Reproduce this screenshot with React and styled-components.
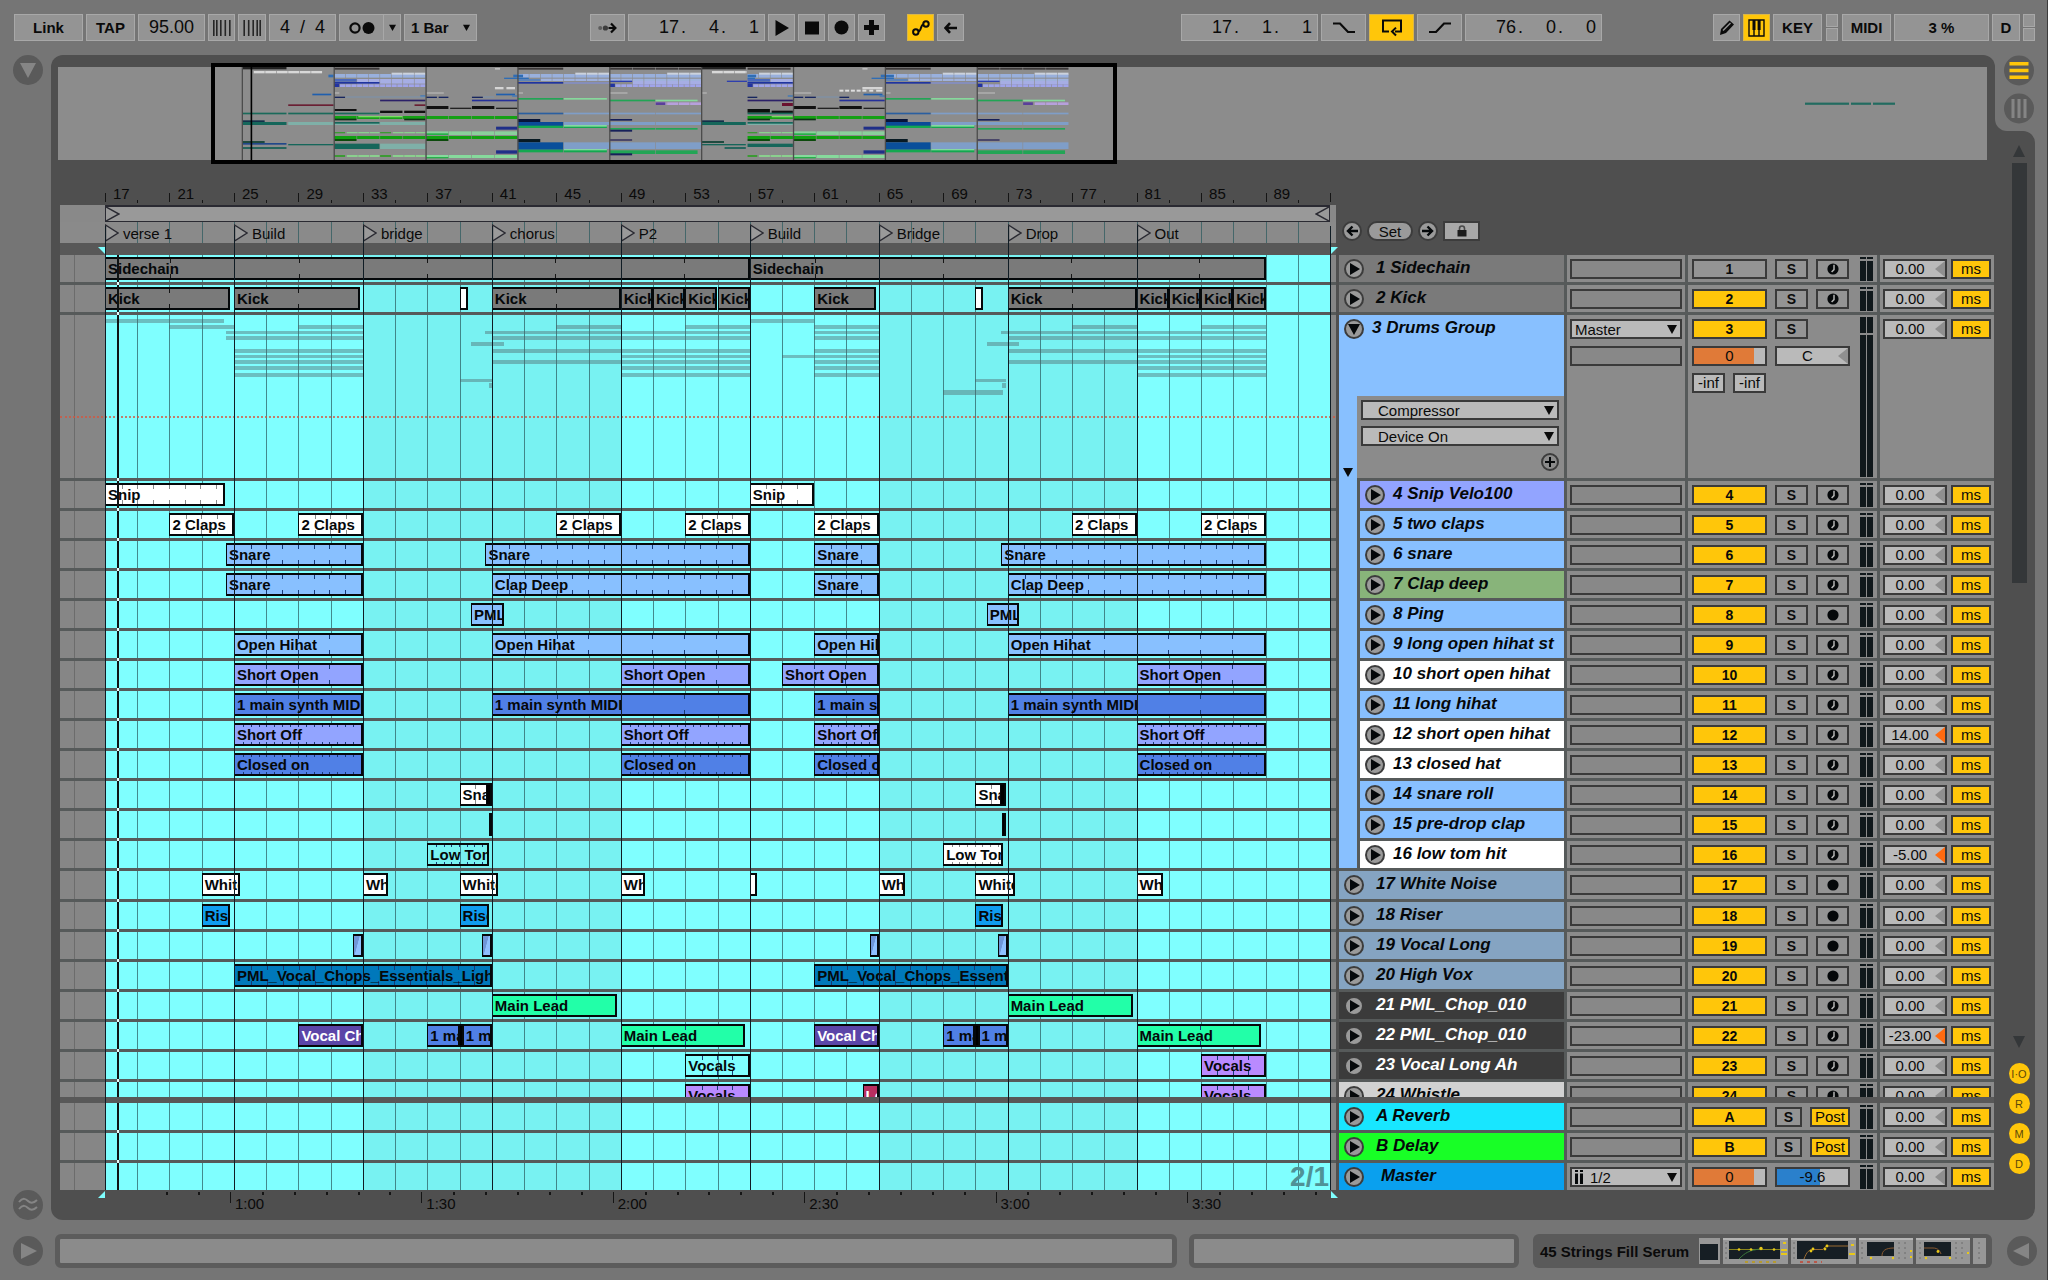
import React from "react";
import styled, { createGlobalStyle } from "styled-components";

const C = {
  chrome: "#757575",
  panel: "#4f4f4f",
  line: "#565a5a",
  cell: "#8b8b8b",
  button: "#949494",
  edge: "#a8a8a8",
  yellow: "#ffc60a",
  cyan: "#7fffff",
  field: "#bababa",
  outline: "#3a3a3a",
};
const FONT = '"Liberation Sans", Arial, sans-serif';

const GlobalStyle = createGlobalStyle`
  *, *::before, *::after { box-sizing: border-box; }
  html, body { margin: 0; height: 100%; overflow: hidden; }
  body { background: ${C.chrome}; font-family: ${FONT}; color: #0a0a0a; }
  button, input, select { font-family: inherit; color: inherit; margin: 0; padding: 0; border-radius: 0; }
`;

/* ---------- page frame ---------- */

const Page = styled.div`
  display: grid;
  grid-template-rows: 55px minmax(0, 1fr) 60px;
  height: 100vh;
  background: ${C.chrome};
  border-right: 1px solid #3c3c3c;
`;

const Body = styled.div`
  display: grid;
  grid-template-columns: 51px minmax(0, 1fr) 40px 12px;
  min-height: 0;
`;

const LeftRail = styled.div`
  display: flex;
  flex-direction: column;
  align-items: center;
  justify-content: space-between;
  padding-left: 4px;
`;

const Panel = styled.main`
  display: grid;
  grid-template-rows: 105px 45px 17px minmax(0, 1fr) 30px;
  min-height: 0;
  background: ${C.panel};
  border-radius: 12px 12px 0 12px;
`;

const IconButton = styled.button`
  display: flex;
  align-items: center;
  justify-content: center;
  border: 0;
  background: none;
  cursor: pointer;
  svg { display: block; }
`;

/* ---------- control bar ---------- */

const Toolbar = styled.header`
  display: grid;
  grid-template-columns: 576px 591px 1fr auto;
  align-items: start;
  padding: 14px 12px 0 14px;
`;

const Group = styled.div`
  display: flex;
  gap: 3px;
`;

const ToolButton = styled.button`
  display: flex;
  align-items: center;
  justify-content: center;
  width: ${(p) => p.$w}px;
  height: 27px;
  border: 1px solid ${(p) => (p.$on ? "#d9b64a" : C.edge)};
  background: ${(p) => (p.$on ? C.yellow : C.button)};
  font-size: 15px;
  font-weight: bold;
  margin-left: ${(p) => p.$gap || 0}px;
`;

const ToolInput = styled.input`
  width: ${(p) => p.$w}px;
  height: 27px;
  border: 1px solid ${C.edge};
  background: ${C.button};
  font-size: 18px;
  text-align: center;
`;

const Metronome = styled.div`
  display: flex;
  width: 62px;
  height: 27px;
  border: 1px solid ${C.edge};
  background: ${C.button};
  ${IconButton}:first-child { flex: 1; border-right: 1px solid ${C.edge}; }
  ${IconButton}:last-child { width: 16px; }
`;

const SelectWrap = styled.label`
  display: flex;
  align-items: center;
  width: ${(p) => (p.$w ? p.$w + "px" : "auto")};
  height: ${(p) => p.$h || 20}px;
  border: ${(p) => (p.$tool ? `1px solid ${C.edge}` : `2px solid ${C.outline}`)};
  background: ${(p) => (p.$tool ? C.button : C.field)};
  padding: 0 ${(p) => (p.$tool ? 6 : 3)}px;
  select {
    flex: 1;
    min-width: 0;
    border: 0;
    background: none;
    appearance: none;
    outline: 0;
    font-size: 15px;
    font-weight: ${(p) => (p.$tool ? "bold" : "normal")};
    padding-left: ${(p) => p.$pad || 0}px;
  }
`;

const Position = styled.div`
  display: flex;
  align-items: center;
  width: 137px;
  height: 27px;
  border: 1px solid ${C.edge};
  background: ${C.button};
  font-size: 18px;
  input {
    width: 33px;
    border: 0;
    background: none;
    font-size: 18px;
    text-align: right;
  }
  input:first-child { width: 50px; }
  span { width: 7px; padding-left: 2px; }
`;

const MiniPair = styled.div`
  display: grid;
  grid-template-rows: 13px 13px;
  gap: 1px;
  width: ${(p) => p.$w}px;
  margin: 0 ${(p) => p.$gap || 0}px;
  span { border: 1px solid ${C.edge}; background: ${C.button}; }
`;

const Caret = ({ size = 10 }) => (
  <svg width={size} height={size} viewBox="0 0 10 10" aria-hidden="true">
    <path d="M0 1h10L5 10z" fill="#0a0a0a" />
  </svg>
);

const Bars = ({ flip }) => (
  <svg width="18" height="16" viewBox="0 0 18 16" aria-hidden="true">
    <g fill="#262626" transform={flip ? "translate(18 0) scale(-1 1)" : undefined}>
      <rect x="0" y="0" width="1.6" height="16" />
      <rect x="3" y="0" width="1.6" height="16" />
      <rect x="7" y="0" width="1.6" height="16" />
      <rect x="11.5" y="0" width="1.6" height="16" />
      <rect x="16" y="0" width="1.6" height="16" />
    </g>
  </svg>
);

function PositionField({ label, values }) {
  return (
    <Position role="group" aria-label={label}>
      <input aria-label={label + " bars"} defaultValue={values[0]} />
      <span>.</span>
      <input aria-label={label + " beats"} defaultValue={values[1]} />
      <span>.</span>
      <input aria-label={label + " sixteenths"} defaultValue={values[2]} />
    </Position>
  );
}

function ControlBar() {
  return (
    <Toolbar>
      <Group>
        <ToolButton $w={69}>Link</ToolButton>
        <ToolButton $w={49}>TAP</ToolButton>
        <ToolInput $w={67} aria-label="Tempo" defaultValue="95.00" />
        <ToolButton $w={27} aria-label="Nudge down"><Bars /></ToolButton>
        <ToolButton $w={28} aria-label="Nudge up"><Bars flip /></ToolButton>
        <ToolInput $w={67} aria-label="Time signature" defaultValue="4  /  4" />
        <Metronome>
          <IconButton aria-label="Metronome">
            <svg width="28" height="14" viewBox="0 0 28 14">
              <circle cx="7" cy="7" r="4.6" fill="none" stroke="#0a0a0a" strokeWidth="2.2" />
              <circle cx="20.5" cy="7" r="6" fill="#0a0a0a" />
            </svg>
          </IconButton>
          <IconButton aria-label="Metronome options"><Caret size={7} /></IconButton>
        </Metronome>
        <SelectWrap $tool $w={73} $h={27}>
          <select aria-label="Quantization" defaultValue="1 Bar"><option>1 Bar</option></select>
          <Caret size={7} />
        </SelectWrap>
      </Group>
      <Group>
        <ToolButton $w={35} aria-label="Follow">
          <svg width="19" height="12" viewBox="0 0 19 12">
            <circle cx="2.2" cy="6" r="2" fill="#5c5c5c" />
            <circle cx="7.4" cy="6" r="2.6" fill="#3c3c3c" />
            <path d="M10.500 6h6M13 1.500L17.400 6 13 10.500" fill="none" stroke="#0a0a0a" strokeWidth="2.200" />
          </svg>
        </ToolButton>
        <PositionField label="Arrangement position" values={[17, 4, 1]} />
        <ToolButton $w={27} aria-label="Play">
          <svg width="16" height="16" viewBox="0 0 16 16"><path d="M1.5 0v16L15 8z" fill="#0a0a0a" /></svg>
        </ToolButton>
        <ToolButton $w={27} aria-label="Stop">
          <svg width="14" height="14" viewBox="0 0 14 14"><rect width="14" height="13" y=".5" fill="#0a0a0a" /></svg>
        </ToolButton>
        <ToolButton $w={27} aria-label="Record">
          <svg width="15" height="15" viewBox="0 0 15 15"><circle cx="7.5" cy="7.5" r="7" fill="#0a0a0a" /></svg>
        </ToolButton>
        <ToolButton $w={27} aria-label="Overdub">
          <svg width="15" height="15" viewBox="0 0 15 15"><path d="M5 0h5v5h5v5h-5v5H5v-5H0V5h5z" fill="#0a0a0a" /></svg>
        </ToolButton>
        <ToolButton $w={27} $on $gap={19} aria-label="Automation arm">
          <svg width="18" height="16" viewBox="0 0 18 16">
            <g fill="none" stroke="#0a0a0a" strokeWidth="2">
              <circle cx="3.8" cy="12" r="2.7" />
              <circle cx="14" cy="4" r="2.7" />
              <path d="M6.4 11.2c3 0 2-6.2 5-6.6" />
            </g>
          </svg>
        </ToolButton>
        <ToolButton $w={27} aria-label="Back to arrangement">
          <svg width="14" height="12" viewBox="0 0 14 12">
            <path d="M1.5 6H13M6 1.2L1.5 6 6 10.8" fill="none" stroke="#0a0a0a" strokeWidth="2.6" />
          </svg>
        </ToolButton>
      </Group>
      <Group>
        <PositionField label="Loop start" values={[17, 1, 1]} />
        <ToolButton $w={45} aria-label="Punch in">
          <svg width="24" height="12" viewBox="0 0 24 12"><path d="M1 1.5h7l8 8.5h7" fill="none" stroke="#0a0a0a" strokeWidth="2.2" /></svg>
        </ToolButton>
        <ToolButton $w={45} $on aria-label="Loop">
          <svg width="22" height="18" viewBox="0 0 22 18">
            <path d="M8 12.5H2V1.5h18v11h-6M15 8.6l-4 3.9 4 4" fill="none" stroke="#0a0a0a" strokeWidth="2" />
          </svg>
        </ToolButton>
        <ToolButton $w={45} aria-label="Punch out">
          <svg width="24" height="12" viewBox="0 0 24 12"><path d="M1 10h7l8-8.5h7" fill="none" stroke="#0a0a0a" strokeWidth="2.2" /></svg>
        </ToolButton>
        <PositionField label="Loop length" values={[76, 0, 0]} />
      </Group>
      <Group>
        <ToolButton $w={27} aria-label="Draw mode">
          <svg width="18" height="18" viewBox="0 0 18 18">
            <path d="M2 16l1-6L11.5 1.5l4.5 4L8 14z" fill="#0a0a0a" />
            <path d="M5 11.5L12.5 4" stroke="#949494" strokeWidth="1.4" />
          </svg>
        </ToolButton>
        <ToolButton $w={27} $on aria-label="Computer MIDI keyboard">
          <svg width="17" height="18" viewBox="0 0 17 18">
            <path d="M1 1h15v16H1zM6 1v16M11 1v16" fill="none" stroke="#0a0a0a" strokeWidth="1.4" />
            <path d="M4.5 1h3v10h-3zM9.6 1h3v10h-3z" fill="#0a0a0a" />
          </svg>
        </ToolButton>
        <ToolButton $w={49}>KEY</ToolButton>
        <MiniPair $w={12} $gap={1}><span /><span /></MiniPair>
        <ToolButton $w={49}>MIDI</ToolButton>
        <ToolButton $w={95}>3 %</ToolButton>
        <ToolButton $w={28}>D</ToolButton>
        <MiniPair $w={12}><span /><span /></MiniPair>
      </Group>
    </Toolbar>
  );
}

/* ---------- overview ---------- */

const OverviewArea = styled.div`
  display: flex;
  padding: 12px 8px 0 7px;
`;

const OverviewStrip = styled.div`
  position: relative;
  flex: 1;
  height: 93px;
  background: #8c8c8c;
  svg { display: block; width: 100%; height: 100%; }
`;

const ViewWindow = styled.div`
  position: absolute;
  inset: -4px 0;
  border: 4px solid #000;
`;

const rep = (y, h, color, spans) => ({ y, h, color, spans });
const each = (from, to, step = 1) => {
  const out = [];
  for (let b = from; b < to; b += step) out.push([b, Math.min(b + step, to)]);
  return out;
};

const OVERVIEW = [
  rep(35, 8, "#222", [[17, 20.9], [57, 60.9]]),
  rep(38, 6, "#3d3a3a", [[25, 29], [41, 45], ...each(49, 57, 2), [61, 64.8], [73, 77], ...each(81, 89, 2)]),
  rep(39, 5, "#bbb", [[39, 39.5], [71, 71.5]]),
  rep(48, 7, "#d8d8d8", [...each(18, 24), ...each(57.9, 61)]),
  rep(57, 11, "#99b0dd", [...each(25, 33), ...each(41, 57), ...each(61, 65), ...each(73, 89)]),
  rep(53, 6, "#ccd2dc", [...each(30, 33), ...each(46, 49), ...each(54, 57), ...each(62, 65), ...each(78, 81), ...each(86, 89)]),
  rep(59, 8, "#2f6db5", [[24.5, 25], [40.6, 41.5], [61, 61.8], [72.6, 73.8]]),
  rep(68, 4, "#2f6db5", [[39.8, 42], [61, 61.7], [71.8, 73.8]]),
  rep(72, 8, "#4a68bb", [[25, 27], [61, 63]]),
  rep(72, 14, "#a6aee4", [...each(27, 33), [63, 65]]),
  rep(72, 6, "#5c83b8", [[41, 43], [73, 75]]),
  rep(71, 7, "#9fb2dd", [...each(43, 57), ...each(75, 89)]),
  rep(78, 10, "#a6aee4", [...each(51, 57), ...each(83, 89)]),
  rep(81, 5, "#1f34a0", [[25, 29], [41, 45], [61, 65], [73, 77]]),
  rep(82, 4, "#8290d2", [[45, 49], [77, 81]]),
  rep(77, 4, "#2f3fae", [[49, 51], [59.2, 61], [81, 83]]),
  rep(88, 8, "#a0a4ea", [...each(25.5, 33, 0.5), ...each(49.5, 57, 0.5), ...each(61.5, 65, 0.5), ...each(81.5, 89, 0.5)]),
  rep(86, 10, "#2233a0", [[25, 25.5], [49, 49.5], [61, 61.5], [81, 81.5]]),
  rep(96, 7, "#d5d5d5", [[39, 39.8], [40, 40.8], [71, 72.8]]),
  rep(104, 6, "#dedede", [[69, 69.4], [69.5, 69.9], [70, 70.4], [70.5, 70.9], [71, 71.4], [71.6, 72], [72.2, 72.8]]),
  rep(112, 4, "#b4b4b4", [[25, 25.5], [33, 34.6], [41, 41.5], [49, 50.6], [57, 57.5], [65, 66.6], [73, 73.5], [81, 82.6]]),
  rep(116, 5, "#1f5fae", [[23.1, 24.8], [39.1, 40.8], [71.1, 72.8]]),
  rep(121, 4, "#3c78bb", [[32.5, 33], [40.5, 41], [64.5, 65], [72.5, 73]]),
  rep(125, 4, "#17265f", [[25, 26], [33, 34], [34.1, 35], [37, 38], [61, 61.9], [65, 65.9], [66, 67], [69, 69.9]]),
  rep(125, 2, "#7496c0", [[26, 33], [38, 39], [67, 69]]),
  rep(129, 5, "#22a555", [[41, 45], [73, 77]]),
  rep(129, 5, "#86d99c", [[45, 48.8], [77, 80.8]]),
  rep(134, 5, "#2b2068", [[29, 33], [61, 65]]),
  rep(134, 5, "#25309a", [[37, 41], [69, 73]]),
  rep(134, 5, "#22a555", [[49, 53], [81, 85]]),
  rep(134, 5, "#86d99c", [[53, 56.7], [85, 88.7]]),
  rep(142, 8, "#b7a0dc", each(53, 57).concat(each(86, 89))),
  rep(142, 8, "#5a3f9a", [[53, 53.9], [85, 85.9]]),
  rep(148, 5, "#6a1f33", [[21, 25], [32, 33]]),
  rep(144, 9, "#6a1230", [[64, 65]]),
  rep(153, 9, "#111", [[33, 35], [37, 39], [65, 67], [69, 71]]),
  rep(158, 4, "#222", [[35.1, 37], [39.1, 41], [67.1, 69], [71.1, 73]]),
  rep(162, 6, "#101010", [[25, 27]]),
  rep(167, 7, "#101010", [[29, 31], [31.1, 33], [63.1, 65]]),
  rep(162, 11, "#0a0f0d", [[61, 63]]),
  rep(173, 5, "#1a6a5a", [[17, 20.9], [21, 25], [25, 29], [61, 65]]),
  rep(173, 5, "#7f9ec8", [[45, 49], [49, 53], [53, 57], [77, 81], [81, 85], [85, 89]]),
  rep(173, 5, "#2a5fa0", [[41, 45], [73, 77]]),
  rep(183, 9, "#14a014", [...each(25, 33, 2), ...each(33, 41, 2), [61, 65], ...each(65, 73, 2)]),
  rep(183, 4, "#79dc62", [[27.1, 31], [63.1, 65]]),
  rep(191, 5, "#11301a", [[25, 27], [31.1, 33], [61, 63], [65, 67]]),
  rep(192, 5, "#17205a", [[49, 51], [81, 83]]),
  rep(196, 5, "#14304a", [[17, 19], [57, 59]]),
  rep(192, 9, "#06143a", [[41, 43], [73, 75]]),
  rep(201, 9, "#15665a", [[17, 20.9], [57, 60.9]]),
  rep(201, 9, "#7fb0a8", [[21, 25], [25, 29], [29, 33], [61, 65]]),
  rep(201, 5, "#15665a", [[25, 29], [61, 65]]),
  rep(201, 12, "#0b4a98", [[41, 45], [73, 77]]),
  rep(201, 9, "#7f9ec8", [[45, 49], [49, 53], [53, 57], [77, 81], [81, 85], [85, 89]]),
  rep(212, 7, "#14a850", [[41, 45], [45, 48.8], [73, 77], [77, 80.8]]),
  rep(210, 5, "#86d9a0", [[45, 48.8], [77, 80.8]]),
  rep(219, 5, "#22a555", [[49, 53], [53, 56.7], [81, 85], [85, 88.7]]),
  rep(215, 9, "#1f2f88", [[39.1, 41], [71.1, 73]]),
  rep(224, 6, "#17205a", [[49, 51]]),
  rep(231, 4, "#3c9a34", [[25, 26], [29, 30], [61, 61.9]]),
  rep(231, 4, "#8ad08e", each(26.1, 29).concat(each(30.1, 33), each(62, 65))),
  rep(229, 11, "#8ad09c", [...each(33, 41, 2), ...each(65, 73, 2)]),
  rep(235, 5, "#27b04a", [[33, 35], [65, 67]]),
  rep(243, 9, "#10a010", [...each(25, 41, 2), ...each(61, 73, 2)]),
  rep(252, 6, "#0c4a0c", [[25, 27], [33, 35], [61, 63], [65, 67]]),
  rep(252, 10, "#081a24", [[41, 43], [73, 75]]),
  rep(253, 4, "#2a2458", [[49, 51], [81, 83]]),
  rep(258, 6, "#1f4a3f", [[17, 19], [57, 59]]),
  rep(264, 5, "#22488a", [[17, 20.9]]),
  rep(267, 4, "#15665a", [[21, 25], [57, 60.9]]),
  rep(276, 6, "#26655d", [[17, 20.9], [59, 60.9]]),
  rep(266, 16, "#15665a", [[25, 29]]),
  rep(266, 16, "#7fb0a8", [[29, 33]]),
  rep(266, 10, "#15665a", [[61, 65]]),
  rep(262, 22, "#0a4f9a", [[41, 45], [73, 77]]),
  rep(262, 20, "#7f9ec8", [[45, 49], [49, 53], [53, 57], [77, 81], [81, 85], [85, 89]]),
  rep(284, 8, "#14a850", [[41, 45], [45, 48.8], [73, 77], [77, 80.8]]),
  rep(282, 4, "#86d9a0", [[45, 48.8], [77, 80.8]]),
  rep(286, 11, "#22a555", [[49, 53], [53, 56.7], [81, 85], [85, 88.7]]),
  rep(286, 10, "#1f2f88", [[39.1, 41], [71.1, 73]]),
  rep(295, 6, "#17205a", [[49, 51]]),
  rep(300, 6, "#3c9a34", [[25, 26], [29, 30], [61, 61.9]]),
  rep(300, 6, "#8ad08e", each(26.1, 29).concat(each(30.1, 33), each(62, 65))),
  rep(300, 9, "#86da9c", [...each(33, 41, 2), ...each(65, 73, 2)]),
  rep(306, 4, "#27b04a", [[33, 35], [65, 67]]),
];

const OV_W = 1929;
const ovX = (bar) => 184.3 + (bar - 17) * 11.483;

function Overview() {
  return (
    <OverviewArea>
      <OverviewStrip>
        <svg viewBox={`0 0 ${OV_W} 93`} preserveAspectRatio="none" aria-label="Arrangement overview">
          {OVERVIEW.map((r, i) =>
            r.spans.map(([a, b], j) => (
              <rect key={i + "-" + j} x={ovX(a)} y={r.y / 3 - 12} width={ovX(b) - ovX(a) - 0.6} height={r.h / 3} fill={r.color} />
            ))
          )}
          {each(17, 89, 8).map(([b]) => (
            <rect key={b} x={ovX(b) - 0.6} y="0" width="1.3" height="93" fill="#4c4c4c" />
          ))}
          <rect x="192.6" y="0" width="1.6" height="93" fill="#000" />
          <g fill="#226b60">
            <rect x="1747" y="35.6" width="44" height="2.2" />
            <rect x="1793" y="35.6" width="20" height="2.2" />
            <rect x="1815" y="35.6" width="22" height="2.2" />
          </g>
        </svg>
        <ViewWindow style={{ left: `${(153 / OV_W) * 100}%`, right: `${(870 / OV_W) * 100}%` }} />
      </OverviewStrip>
    </OverviewArea>
  );
}

/* ---------- timeline data ---------- */

const START = 17;
const SPAN = 76;
const HEAD = 17.75;
const pct = (bar) => `${((bar - START) / SPAN) * 100}%`;
const wPct = (bars) => `${(bars / SPAN) * 100}%`;

const GREY = "#7a7a7a", WHITE = "#fff", SKY = "#88c0ff", LILAC = "#92a4ff", ROYAL = "#5080e6";
const OCEAN = "#0078bb", MINT = "#22ffa8", PURPLE = "#b98aff", VIOLET = "#5b45a8", CRIMSON = "#b82f60";

const many = (name, color, tick, spans) => spans.map(([a, b]) => ({ name, color, tick, a, b }));
const FULL = [[25, 33], [41, 57], [61, 65], [73, 89]];
const HALF = [[25, 33], [49, 57], [61, 65], [81, 89]];

const TRACKS = [
  { n: 1, name: "Sidechain", color: GREY, off: true, clips: many("Sidechain", GREY, 4, [[17, 57], [57, 89]]) },
  {
    n: 2, name: "Kick", color: GREY,
    clips: [
      ...many("Kick", GREY, 4, [[17, 24.75], [25, 32.85], [41, 49], ...each(49, 57, 2), [61, 64.85], [73, 81], ...each(81, 89, 2)]),
      ...many("", WHITE, 0, [[39, 39.5], [71, 71.5]]),
    ],
  },
  { n: 3, name: "Drums Group", color: SKY, group: true, clips: [] },
  { n: 4, name: "Snip Velo100", color: LILAC, nested: true, clips: many("Snip", WHITE, 1, [[17, 24.45], [57, 61]]) },
  { n: 5, name: "two claps", color: SKY, nested: true, clips: many("2 Claps", WHITE, 1, [[21, 25], [29, 33], [45, 49], [53, 57], [61, 65], [77, 81], [85, 89]]) },
  { n: 6, name: "snare", color: SKY, nested: true, clips: many("Snare", SKY, 1, [[24.5, 33], [40.6, 57], [61, 65], [72.6, 89]]) },
  {
    n: 7, name: "Clap deep", color: "#88b47a", nested: true,
    clips: [...many("Snare", SKY, 1, [[24.5, 33], [61, 65]]), ...many("Clap Deep", SKY, 1, [[41, 57], [73, 89]])],
  },
  { n: 8, name: "Ping", color: SKY, nested: true, audio: true, clips: many("PML", SKY, 0, [[39.7, 41.75], [71.7, 73.7]]) },
  { n: 9, name: "long open hihat st", color: SKY, nested: true, clips: many("Open Hihat", SKY, 2, FULL) },
  { n: 10, name: "short open hihat", color: WHITE, nested: true, clips: many("Short Open", LILAC, 2, [[25, 33], [49, 57], [59, 65], [81, 89]]) },
  { n: 11, name: "long hihat", color: SKY, nested: true, clips: many("1 main synth MIDI", ROYAL, 4, FULL) },
  { n: 12, name: "short open hihat", color: WHITE, nested: true, delay: "14.00", clips: many("Short Off", LILAC, 0.5, HALF) },
  { n: 13, name: "closed hat", color: WHITE, nested: true, clips: many("Closed on", ROYAL, 0.5, HALF) },
  {
    n: 14, name: "snare roll", color: SKY, nested: true,
    clips: [...many("Snare", WHITE, 1, [[39, 41], [71, 72.9]]), ...many("", "#000", 0, [[40.65, 41], [72.55, 72.9]])],
  },
  { n: 15, name: "pre-drop clap", color: SKY, nested: true, clips: many("", "#000", 0, [[40.8, 41], [72.65, 72.9]]) },
  {
    n: 16, name: "low tom hit", color: WHITE, nested: true, last: true, delay: "-5.00",
    clips: [...many("Low Tom", "transparent", 0.5, [[37, 40.8]]), ...many("Low Tom", WHITE, 0.5, [[69, 72.7]])],
  },
  {
    n: 17, name: "White Noise", color: "#85a4c2", audio: true,
    clips: [
      ...many("White", WHITE, 0, [[23, 25.4], [33, 34.55], [39, 41.4], [49, 50.5], [65, 66.65], [71, 73.45], [81, 82.65]]),
      ...many("", WHITE, 0, [[57, 57.45]]),
    ],
  },
  { n: 18, name: "Riser", color: "#85a4c2", audio: true, clips: many("Riser", "#0f9cef", 0, [[23, 24.75], [39, 40.8], [71, 72.7]]) },
  { n: 19, name: "Vocal Long", color: "#85a4c2", audio: true, clips: many("", "fade", 0, [[32.4, 33], [40.4, 41], [64.45, 65], [72.4, 73]]) },
  { n: 20, name: "High Vox", color: "#85a4c2", audio: true, clips: many("PML_Vocal_Chops_Essentials_Light", OCEAN, 1, [[25, 41], [61, 73]]) },
  { n: 21, name: "PML_Chop_010", color: "#3b3b3b", light: true, clips: many("Main Lead", MINT, 4, [[41, 48.75], [73, 80.75]]) },
  {
    n: 22, name: "PML_Chop_010", color: "#3b3b3b", light: true, delay: "-23.00",
    clips: [
      ...many("Vocal Chop", VIOLET, 0, [[29, 33], [61, 65]]),
      ...many("1 main", ROYAL, 0, [[37, 39], [39.2, 41], [69, 71], [71.2, 73]]),
      ...many("", "#000", 0, [[38.95, 39.3], [70.95, 71.3]]),
      ...many("Main Lead", MINT, 4, [[49, 56.7], [81, 88.75]]),
    ],
  },
  {
    n: 23, name: "Vocal Long Ah", color: "#3b3b3b", light: true,
    clips: [...many("Vocals", "transparent", 1, [[53, 57]]), ...many("Vocals", PURPLE, 1, [[85, 89]])],
  },
  {
    n: 24, name: "Whistle", color: "#d2d2d2",
    clips: [...many("Vocals", PURPLE, 1, [[53, 57], [85, 89]]), ...many("Lead", CRIMSON, 0, [[64, 65]])],
  },
];

const RETURNS = [
  { n: "A", name: "Reverb", color: "#18e6ff", post: true },
  { n: "B", name: "Delay", color: "#18ff26", post: true },
  { n: "", name: "Master", color: "#0aa0ee", master: true },
];

const GROUP_NOTES = [
  [4, 4, [[17, 24.4], [57, 61]]],
  [10, 4, [[21, 25], [29, 33], [45, 49], [53, 57], [61, 65], [77, 81], [85, 89]]],
  [16, 3, [[24.5, 33], [40.6, 57], [61, 65], [72.6, 89]]],
  [21, 4, [[24.5, 33], [41, 57], [61, 65], [73, 89]]],
  [27, 4, [[39.7, 41.75], [71.7, 73.7]]],
  [34, 4, FULL],
  [40, 3, [[25, 33], [49, 57], [59, 65], [81, 89]]],
  [45, 4, FULL],
  [51, 4, HALF],
  [58, 4, HALF],
  [64, 3, [[39, 41], [71, 72.9]]],
  [68, 5, [[40.8, 41], [72.65, 72.9]]],
  [75, 5, [[69, 72.7]]],
];

/* ---------- timeline ---------- */

const LOWER = `display: grid; grid-template-columns: minmax(0, 1fr) 655px; column-gap: 3px; padding: 0 1px 0 9px;`;

const RulerRow = styled.div`${LOWER}`;
const LoopRow = styled.div`${LOWER}`;
const MainRow = styled.div`${LOWER} min-height: 0;`;
const TimeRow = styled.div`${LOWER}`;

const Scale = styled.div`
  position: relative;
  margin: 0 6px 0 45px;
`;

const Tick = styled.span`
  position: absolute;
  top: ${(p) => p.$top}px;
  width: ${(p) => p.$w || 1}px;
  height: ${(p) => p.$h}px;
  background: #151515;
`;

const ScaleText = styled.span`
  position: absolute;
  top: ${(p) => p.$top}px;
  padding-left: ${(p) => p.$pad}px;
  font-size: 15px;
  line-height: 18px;
`;

const LoopLane = styled.div`
  display: flex;
  background: #898989;
  padding: 0 6px 0 45px;
`;

const LoopBrace = styled.div`
  display: flex;
  flex: 1;
  justify-content: space-between;
  border: 1px solid #2a2a32;
  border-top-width: 2px;
  background: #999;
  svg { display: block; height: 14px; }
`;

const Arrangement = styled.div`
  position: relative;
  display: grid;
  grid-template-rows: 21px 12px minmax(0, 1fr) 6px 87px;
  min-height: 0;
  background: ${C.line};
`;

const Locators = styled.div`
  position: relative;
  background: #8a8a8a;
  padding: 0 6px 0 45px;
`;

const Locator = styled.button`
  position: absolute;
  display: flex;
  align-items: center;
  height: 22px;
  border: 0;
  background: none;
  font-size: 15px;
  svg { display: block; margin-right: 4px; }
`;

const Strip = styled.div`
  position: relative;
  background: #585858;
`;

const Lanes = styled.div`
  display: grid;
  grid-template-rows: ${(p) => p.$rows};
  min-height: 0;
  overflow: hidden;
`;

const TRACK_ROWS = "minmax(0, 30fr) minmax(0, 30fr) minmax(0, 165fr) repeat(20, minmax(0, 30fr)) minmax(0, 15fr)";
const RETURN_ROWS = "30px 30px 27px";

const LaneRow = styled.div`
  position: relative;
  padding: 0 6px 0 45px;
  min-height: 0;
  border-bottom: ${(p) => (p.$open ? 0 : 3)}px solid ${C.line};
  background: linear-gradient(90deg, #868686 14px, #6c6c6c 14px 15px, #868686 15px 45px, transparent 45px calc(100% - 5px), #868686 calc(100% - 5px));
`;

const Lane = styled.div`
  position: relative;
  height: 100%;
`;

const clipFill = (c) =>
  c === "fade" ? "linear-gradient(105deg, #6f96d8 45%, #8fc0ff 50%)" : c;

const Clip = styled.div`
  position: absolute;
  top: 2px;
  height: 23px;
  overflow: hidden;
  border: 2px solid #05080a;
  border-left-width: 1px;
  background: ${(p) => clipFill(p.$color)};
  color: ${(p) => (p.$light ? "#fff" : "#05080a")};
`;

const ClipName = styled.span`
  position: relative;
  display: block;
  padding-left: 2px;
  font-size: 15px;
  font-weight: bold;
  line-height: 20px;
  white-space: nowrap;
`;

const ClipTick = styled.span`
  position: absolute;
  top: 0;
  bottom: 0;
  width: 1px;
  border-top: ${(p) => p.$h}px solid ${(p) => p.$ink};
  border-bottom: ${(p) => p.$h}px solid ${(p) => p.$ink};
`;

const Note = styled.span`
  position: absolute;
  background: rgba(82, 100, 104, 0.42);
`;

const Envelope = styled.div`
  position: absolute;
  top: 101px;
  left: -45px;
  right: -5px;
  border-top: 2px dotted rgba(214, 84, 60, 0.75);
`;

const Backdrop = styled.div`
  position: absolute;
  inset: 33px 6px 0 45px;
  background: ${C.cyan};
`;

const Shade = styled.div`
  position: absolute;
  top: 0;
  bottom: 0;
  background: #78f2f2;
`;

const GridLine = styled.div`
  position: absolute;
  top: 0;
  bottom: 0;
  width: 1px;
  background: rgba(40, 88, 92, 0.7);
`;

const Foreground = styled.div`
  position: absolute;
  inset: 0 6px 0 45px;
  pointer-events: none;
`;

const SectionLine = styled.div`
  position: absolute;
  top: 4px;
  bottom: 0;
  width: 1px;
  background: #101c24;
`;

const Playhead = styled.div`
  position: absolute;
  top: 0;
  bottom: -3px;
  width: 2px;
  background: linear-gradient(0deg, #e4ffff 3px, #101414 3px);
`;

const Zoomed = styled.div`
  position: absolute;
  right: 1px;
  bottom: 0;
  color: #4f9296;
  font-size: 28px;
  font-weight: bold;
  line-height: 26px;
`;

const Marker = styled.svg`
  position: absolute;
  top: ${(p) => p.$top}px;
  width: 7px;
  height: 7px;
  margin-left: -7px;
`;

const Flag = () => (
  <svg width="14" height="18" viewBox="0 0 14 18" aria-hidden="true">
    <path d="M.5 1L13 9 .5 17z" fill="#9a9a9a" stroke="#2a2a32" strokeWidth="1.4" />
  </svg>
);

const LOCATORS = [["verse 1", 17], ["Build", 25], ["bridge", 33], ["chorus", 41], ["P2", 49], ["Build", 57], ["Bridge", 65], ["Drop", 73], ["Out", 81]];

function clipTicks({ a, b, tick }) {
  const ticks = [];
  if (!tick) return ticks;
  for (let bar = START; bar < b; bar += tick) {
    if (bar > a && (bar - START) % 8 !== 0) ticks.push(bar);
  }
  return ticks;
}

function ClipView({ clip }) {
  const light = clip.color === VIOLET || clip.color === CRIMSON;
  const ink = clip.color === WHITE ? "#8a8a8a" : clip.color === GREY ? "#151515" : "#173a78";
  return (
    <Clip $color={clip.color} $light={light} style={{ left: pct(clip.a), width: wPct(clip.b - clip.a) }}>
      {clipTicks(clip).map((b) => (
        <ClipTick key={b} $h={clip.tick < 1 ? 2 : 4} $ink={ink} style={{ left: `${((b - clip.a) / (clip.b - clip.a)) * 100}%` }} />
      ))}
      {clip.name && <ClipName>{clip.name}</ClipName>}
    </Clip>
  );
}

function TrackLanes() {
  return (
    <Arrangement>
      <Backdrop>
        <Shade style={{ left: pct(33), width: wPct(16) }} />
        <Shade style={{ left: pct(65), width: wPct(16) }} />
        {each(19, 93, 2).map(([b]) => <GridLine key={b} style={{ left: pct(b) }} />)}
      </Backdrop>
      <Locators>
        <Lane>
          {each(19, 93, 2).map(([b]) => <GridLine key={b} style={{ left: pct(b) }} />)}
          {LOCATORS.map(([name, bar]) => (
            <Locator key={bar} style={{ left: pct(bar) }}><Flag />{name}</Locator>
          ))}
        </Lane>
      </Locators>
      <Strip />
      <Lanes $rows={TRACK_ROWS}>
        {TRACKS.map((t) => (
          <LaneRow key={t.n} $open={t.n === 24}>
            <Lane>
              {t.clips.map((c, i) => <ClipView key={i} clip={c} />)}
              {t.group && GROUP_NOTES.map(([y, h, spans]) =>
                spans.map(([a, b]) => <Note key={y + "-" + a} style={{ top: y, height: h, left: pct(a), width: wPct(b - a) }} />)
              )}
              {t.group && <Envelope />}
              <Playhead style={{ left: pct(HEAD) }} />
            </Lane>
          </LaneRow>
        ))}
      </Lanes>
      <Strip />
      <Lanes $rows={RETURN_ROWS}>
        {RETURNS.map((t) => (
          <LaneRow key={t.name} $open={t.master}>
            <Lane>
              {t.master && <Zoomed>2/1</Zoomed>}
              <Playhead style={{ left: pct(HEAD) }} />
            </Lane>
          </LaneRow>
        ))}
      </Lanes>
      <Foreground>
        {each(17, 89, 8).map(([b]) => <SectionLine key={b} style={{ left: pct(b) }} />)}
        <SectionLine style={{ left: "100%" }} />
        <Marker $top={25} viewBox="0 0 7 7" style={{ left: 0 }}><path d="M0 0h7v7z" fill={C.cyan} /></Marker>
        <Marker $top={25} viewBox="0 0 7 7" style={{ left: "calc(100% + 8px)" }}><path d="M0 0h7L0 7z" fill={C.cyan} /></Marker>
      </Foreground>
    </Arrangement>
  );
}

/* ---------- track headers ---------- */

const Headers = styled.div`
  display: grid;
  grid-template-rows: 33px minmax(0, 1fr) 6px 87px;
  min-height: 0;
`;

const SetTools = styled.div`
  display: flex;
  align-items: start;
  gap: 5px;
  margin-top: -1px;
  padding-left: 3px;
`;

const RoundButton = styled.button`
  display: flex;
  flex: none;
  align-items: center;
  justify-content: center;
  width: ${(p) => p.$w || 20}px;
  height: 20px;
  border: 2px solid #3c3c3c;
  border-radius: ${(p) => (p.$square ? 0 : 10)}px;
  background: ${(p) => (p.$square ? "#a8a8a8" : "#9a9a9a")};
  margin-left: ${(p) => p.$gap || 0}px;
  font-size: 15px;
  svg { display: block; flex: none; }
`;

const HeaderRow = styled.div`
  display: grid;
  grid-template-columns: 225px 118px 189px 114px;
  column-gap: 3px;
  min-height: 0;
  background: ${C.line};
  border-bottom: ${(p) => (p.$open ? 0 : 3)}px solid ${C.line};
`;

const NameCell = styled.div`
  display: grid;
  grid-template-columns: ${(p) => (p.$nested ? "18px minmax(0, 1fr)" : "minmax(0, 1fr)")};
  column-gap: 3px;
  min-height: 0;
`;

const GroupStrip = styled.div`
  background: ${SKY};
  margin-bottom: ${(p) => (p.$last ? 0 : -3)}px;
`;

const NameBar = styled.div`
  display: flex;
  align-items: start;
  gap: ${(p) => p.$gap}px;
  padding: 4px 0 0 5px;
  background: ${(p) => p.$color};
  color: ${(p) => (p.$light ? "#fff" : "#05080a")};
  overflow: hidden;
  h3 {
    margin: 0;
    font-size: 17px;
    font-style: italic;
    font-weight: bold;
    line-height: 18px;
    white-space: nowrap;
  }
`;

const Cell = styled.div`
  display: flex;
  flex-direction: column;
  gap: 7px;
  min-height: 0;
  padding: 4px 3px 0;
  background: ${C.cell};
  overflow: hidden;
`;

const Mixer = styled.div`
  display: grid;
  grid-template-columns: minmax(0, 1fr) 13px;
  min-height: 0;
  padding-right: 4px;
  background: ${C.cell};
  overflow: hidden;
`;

const MixerControls = styled.div`
  display: flex;
  flex-direction: column;
  gap: 7px;
  padding: 4px 0 0 4px;
`;

const Line = styled.div`
  display: flex;
  gap: 8px;
`;

const Slot = styled.div`
  flex: none;
  height: 20px;
  border: 2px solid ${C.outline};
  background: #888;
`;

const Toggle = styled.button`
  display: flex;
  flex: none;
  align-items: center;
  justify-content: center;
  width: ${(p) => p.$w}px;
  height: 20px;
  border: 2px solid ${C.outline};
  background: ${(p) => (p.$on ? C.yellow : C.button)};
  font-size: ${(p) => (p.$plain ? 15 : 14)}px;
  font-weight: ${(p) => (p.$plain ? "normal" : "bold")};
  line-height: 16px;
  white-space: nowrap;
`;

const Value = styled.label`
  display: flex;
  flex: none;
  align-items: center;
  width: ${(p) => p.$w}px;
  height: 20px;
  border: 2px solid ${C.outline};
  background: ${(p) => p.$fill || C.field};
  input {
    flex: 1;
    min-width: 0;
    border: 0;
    background: none;
    font-size: 15px;
    line-height: 16px;
    text-align: center;
  }
  svg { display: block; flex: none; }
`;

const DelayCell = styled.div`
  display: flex;
  align-items: start;
  gap: 4px;
  min-height: 0;
  padding: 4px 3px 0;
  background: ${C.cell};
  overflow: hidden;
`;

const Meters = styled.div`
  display: grid;
  grid-template-columns: 6px 6px;
  column-gap: 1px;
  span {
    background: linear-gradient(#10181b ${(p) => p.$peak}px, #8b8b8b ${(p) => p.$peak}px ${(p) => p.$peak + 2}px, #10181b ${(p) => p.$peak + 2}px);
    margin: 2px 0 1px;
  }
`;

const DeviceArea = styled.div`
  display: flex;
  flex: 1;
  flex-direction: column;
  gap: 6px;
  padding: 4px 5px 0 4px;
  background: ${C.cell};
  ${RoundButton} { align-self: flex-end; width: 18px; height: 18px; background: ${C.cell}; margin-top: 1px; }
`;

const GroupCell = styled.div`
  display: grid;
  grid-template-rows: 81px minmax(0, 1fr);
  min-height: 0;
  background: ${SKY};
  margin-bottom: -3px;
`;

const GroupDevices = styled.div`
  display: flex;
  min-height: 0;
`;

const GroupArrow = styled.div`
  display: flex;
  width: 18px;
  align-items: flex-end;
  justify-content: center;
  padding-bottom: 4px;
`;

const DeviceWrap = styled.div`
  display: flex;
  flex: 1;
  border-bottom: 3px solid ${C.line};
`;

const FoldIcon = ({ open }) => (
  <svg width="12" height="12" viewBox="0 0 12 12" aria-hidden="true">
    <path d={open ? "M0 1h12L6 12z" : "M2 0l10 6L2 12z"} fill="#05080a" />
  </svg>
);

const RecIcon = ({ audio }) => (
  <svg width="12" height="12" viewBox="0 0 12 12" aria-hidden="true">
    <circle cx="6" cy="6" r="5.6" fill="#05080a" />
    {!audio && <path d="M7 1.800v4.800L4.600 9" fill="none" stroke="#b4b4b4" strokeWidth="1.500" />}
  </svg>
);

const Wedge = ({ hot }) => (
  <svg width="10" height="16" viewBox="0 0 10 16" aria-hidden="true">
    <path d="M10 0v16L0 8z" fill={hot ? "#ff6a10" : "#8f8f8f"} />
  </svg>
);

function DropDown({ label, value, pad }) {
  return (
    <SelectWrap $pad={pad}>
      <select aria-label={label} defaultValue={value}><option>{value}</option></select>
      <Caret />
    </SelectWrap>
  );
}

function TrackName({ track }) {
  const title = track.master ? "Master" : `${track.n} ${track.name}`;
  const fold = (
    <RoundButton aria-label={"Unfold " + title}><FoldIcon open={track.group} /></RoundButton>
  );
  if (track.group) {
    return (
      <GroupCell>
        <NameBar $color={SKY} $gap={8}>{fold}<h3>{title}</h3></NameBar>
        <GroupDevices>
          <GroupArrow><Caret /></GroupArrow>
          <DeviceWrap>
            <DeviceArea>
              <DropDown label="Device" value="Compressor" pad={12} />
              <DropDown label="Parameter" value="Device On" pad={12} />
              <RoundButton aria-label="Add automation lane">
                <svg width="10" height="10" viewBox="0 0 10 10"><path d="M5 0v10M0 5h10" stroke="#05080a" strokeWidth="2" /></svg>
              </RoundButton>
            </DeviceArea>
          </DeviceWrap>
        </GroupDevices>
      </GroupCell>
    );
  }
  return (
    <NameCell $nested={track.nested}>
      {track.nested && <GroupStrip $last={track.last} />}
      <NameBar $color={track.color} $light={track.light} $gap={track.master ? 17 : track.nested ? 8 : 12}>
        {fold}
        <h3>{title}</h3>
      </NameBar>
    </NameCell>
  );
}

function TrackHeader({ track, open }) {
  const id = track.master ? "Master" : `Track ${track.n}`;
  const delay = track.delay || "0.00";
  return (
    <HeaderRow $open={open}>
      <TrackName track={track} />
      <Cell>
        {track.group && <DropDown label="Output" value="Master" />}
        {track.master && (
          <SelectWrap $pad={7}>
            <svg width="8" height="14" viewBox="0 0 8 14" aria-hidden="true">
              <path d="M0 0h3v2H0zM5 0h3v2H5zM0 3.500h3V14H0zM5 3.500h3V14H5z" fill="#05080a" />
            </svg>
            <select aria-label="Master output" defaultValue="1/2"><option>1/2</option></select>
            <Caret />
          </SelectWrap>
        )}
        {!track.master && <Slot />}
      </Cell>
      <Mixer>
        <MixerControls>
          {track.master ? (
            <Line>
              <Value $w={75} $fill="linear-gradient(90deg, #e07a38 84%, #bababa 84%)"><input aria-label="Master volume" defaultValue="0" /></Value>
              <Value $w={75} $fill="linear-gradient(90deg, #2a80cc 60%, #bababa 60%)"><input aria-label="Cue volume" defaultValue="-9.6" /></Value>
            </Line>
          ) : (
            <Line>
              <Toggle $w={75} $on={!track.off} aria-label={id + " activator"}>{track.n}</Toggle>
              <Toggle $w={track.post ? 27 : 33} aria-label={id + " solo"}>S</Toggle>
              {track.post && <Toggle $w={40} $on $plain>Post</Toggle>}
              {!track.post && !track.group && <Toggle $w={33} aria-label={id + " arm"}><RecIcon audio={track.audio} /></Toggle>}
            </Line>
          )}
          {track.group && (
            <Line>
              <Value $w={75} $fill="linear-gradient(90deg, #e07a38 84%, #bababa 84%)"><input aria-label="Group volume" defaultValue="0" /></Value>
              <Value $w={75}><input aria-label="Group pan" defaultValue="C" /><Wedge /></Value>
            </Line>
          )}
          {track.group && (
            <Line>
              <Value $w={33}><input aria-label="Send A" defaultValue="-inf" /></Value>
              <Value $w={33}><input aria-label="Send B" defaultValue="-inf" /></Value>
            </Line>
          )}
        </MixerControls>
        <Meters $peak={track.group ? 16 : 2}><span /><span /></Meters>
      </Mixer>
      <DelayCell>
        <Value $w={64}><input aria-label={id + " delay"} defaultValue={delay} /><Wedge hot={!!track.delay} /></Value>
        <Toggle $w={40} $on $plain aria-label={id + " delay unit"}>ms</Toggle>
      </DelayCell>
    </HeaderRow>
  );
}

const Arrow = ({ right }) => (
  <svg width="12" height="12" viewBox="0 0 12 12" aria-hidden="true">
    <path d={right ? "M0 6h10M5.500 1.500L10 6l-4.500 4.500" : "M12 6H2M6.500 1.500L2 6l4.500 4.500"} fill="none" stroke="#05080a" strokeWidth="2.400" />
  </svg>
);

function TrackHeaders() {
  return (
    <Headers>
      <SetTools>
        <RoundButton aria-label="Previous locator"><Arrow /></RoundButton>
        <RoundButton $w={46}>Set</RoundButton>
        <RoundButton aria-label="Next locator"><Arrow right /></RoundButton>
        <RoundButton $w={37} $square aria-label="Lock envelopes">
          <svg width="10" height="12" viewBox="0 0 10 12">
            <path d="M2.500 6V3.500a2.500 2.500 0 0 1 5 0V6" fill="none" stroke="#4a4a4a" strokeWidth="1.600" />
            <rect x=".5" y="5" width="9" height="6.500" fill="#1c1c1c" />
          </svg>
        </RoundButton>
      </SetTools>
      <Lanes $rows={TRACK_ROWS}>
        {TRACKS.map((t) => <TrackHeader key={t.n} track={t} open={t.n === 24} />)}
      </Lanes>
      <Strip />
      <Lanes $rows={RETURN_ROWS}>
        {RETURNS.map((t) => <TrackHeader key={t.name} track={t} open={t.master} />)}
      </Lanes>
    </Headers>
  );
}

/* ---------- side column ---------- */

const Side = styled.aside`
  display: grid;
  grid-template-rows: 76px minmax(0, 1fr);
  min-height: 0;
`;

const TabsBack = styled.div`
  display: grid;
  background: linear-gradient(90deg, ${C.panel} 50%, ${C.chrome} 50%);
`;

const Tabs = styled.div`
  display: flex;
  flex-direction: column;
  align-items: center;
  gap: 7px;
  padding-left: 8px;
  background: ${C.chrome};
  border-bottom-left-radius: 12px;
`;

const ScrollPanel = styled.div`
  display: flex;
  flex-direction: column;
  align-items: center;
  padding: 14px 0 46px 8px;
  background: ${C.panel};
  border-radius: 0 12px 12px 0;
`;

const Thumb = styled.div`
  width: 15px;
  height: 420px;
  margin-top: 6px;
  background: #343739;
`;

const Spacer = styled.div`flex: 1;`;

const Badges = styled.div`
  display: grid;
  gap: 9px;
  padding-top: 15px;
`;

const Badge = styled.button`
  display: flex;
  align-items: center;
  justify-content: center;
  width: 21px;
  height: 21px;
  border: 0;
  border-radius: 50%;
  background: ${C.yellow};
  color: #5c4808;
  font-size: 11px;
`;

function SideColumn() {
  return (
    <Side>
      <TabsBack>
        <Tabs>
          <IconButton aria-label="Arrangement view">
            <svg width="30" height="31" viewBox="0 0 30 31">
              <circle cx="15" cy="15.500" r="15" fill="#5a5a5a" />
              <path d="M5.500 7h19v3.600h-19zM5.500 13.700h19v3.600h-19zM5.500 20.400h19V24h-19z" fill={C.yellow} />
            </svg>
          </IconButton>
          <IconButton aria-label="Session view">
            <svg width="30" height="31" viewBox="0 0 30 31">
              <circle cx="15" cy="15.500" r="15" fill="#5a5a5a" />
              <path d="M7.500 6h3v19h-3zM13.500 6h3v19h-3zM19.500 6h3v19h-3z" fill="#858585" />
            </svg>
          </IconButton>
        </Tabs>
      </TabsBack>
      <ScrollPanel>
        <IconButton aria-label="Scroll up"><svg width="12" height="12" viewBox="0 0 12 12"><path d="M6 0l6 12H0z" fill="#343739" /></svg></IconButton>
        <Thumb />
        <Spacer />
        <IconButton aria-label="Scroll down"><svg width="12" height="12" viewBox="0 0 12 12"><path d="M0 0h12L6 12z" fill="#343739" /></svg></IconButton>
        <Badges>
          <Badge>I·O</Badge>
          <Badge>R</Badge>
          <Badge>M</Badge>
          <Badge>D</Badge>
        </Badges>
      </ScrollPanel>
    </Side>
  );
}

/* ---------- footer ---------- */

const Footer = styled.footer`
  display: grid;
  grid-template-columns: 51px minmax(0, 1126fr) minmax(0, 342fr) minmax(0, 473fr) 55px;
  align-items: start;
  padding-top: 14px;
`;

const FooterIcon = styled.div`
  display: flex;
  justify-content: center;
  padding: 2px 0 0 4px;
`;

const InfoBox = styled.div`
  height: 34px;
  margin-left: ${(p) => p.$gap}px;
  border: 5px solid #5c5c5c;
  border-radius: 6px;
  background: #8b8b8b;
`;

const DeviceBox = styled.div`
  display: flex;
  align-items: center;
  justify-content: space-between;
  height: 34px;
  margin-left: 14px;
  padding: 0 6px 0 7px;
  border-radius: 6px;
  background: #5a5a5a;
  font-size: 15px;
  font-weight: bold;
  white-space: nowrap;
  svg { display: block; flex: none; }
`;

const DeviceThumbs = () => (
  <svg width="287" height="26" viewBox="0 0 287 26" aria-label="Device chain">
    <g fill="#979797">
      <rect x="0" y="0" width="21" height="26" />
      <rect x="24" y="0" width="65" height="26" />
      <rect x="92" y="0" width="65" height="26" />
      <rect x="160" y="0" width="54" height="26" />
      <rect x="217" y="0" width="54" height="26" />
      <rect x="274" y="0" width="13" height="26" />
    </g>
    <g fill="#b5b5b5">
      <rect x="24" y="0" width="65" height="2" />
      <rect x="92" y="0" width="65" height="2" />
      <rect x="160" y="0" width="54" height="2" />
      <rect x="217" y="0" width="54" height="2" />
    </g>
    <g fill="#161e24">
      <rect x="1" y="6" width="18" height="16" />
      <rect x="30" y="3" width="51" height="18" />
      <rect x="98" y="3" width="51" height="18" />
      <rect x="168" y="4" width="27" height="14" />
      <rect x="225" y="4" width="27" height="14" />
    </g>
    <path d="M30 11.500h51" stroke="#8a861c" strokeWidth="1" />
    <path d="M40 21c6-6 10-9 22-10" stroke="#3c7a3c" fill="none" />
    <path d="M105 21c3-8 5-9 10-9.500h9l3-3.500h22" stroke="#9a6a30" fill="none" />
    <path d="M183 18c0-5 3-8 12-8M225 10h9c5 0 7 3 8 6" stroke="#8a5a30" fill="none" />
    <g fill="#e8c818">
      <circle cx="40" cy="11.500" r="1.300" /><circle cx="52" cy="11.500" r="1.300" /><circle cx="62" cy="10.500" r="1.700" /><circle cx="75" cy="11.500" r="1.300" />
      <circle cx="112" cy="13" r="1.400" /><circle cx="114" cy="11" r="1.400" /><circle cx="126" cy="11" r="1.400" /><circle cx="128" cy="8" r="1.400" />
      <circle cx="239" cy="13.500" r="1.400" /><circle cx="172" cy="20" r="1.200" /><circle cx="194" cy="20" r="1.200" /><circle cx="227" cy="20" r="1.200" /><circle cx="251" cy="20" r="1.200" />
      <rect x="82" y="11" width="6" height="2" /><rect x="82" y="15" width="6" height="2" /><rect x="150" y="15" width="6" height="2" /><rect x="84" y="4" width="3" height="2" /><rect x="152" y="6" width="3" height="2" />
      <rect x="211" y="12" width="2" height="2" /><rect x="211" y="18" width="2" height="2" /><rect x="268" y="14" width="2" height="2" />
    </g>
    <path d="M46 24h32" stroke="#b59a30" strokeWidth="2" strokeDasharray="3 4" />
    <path d="M101 24h22" stroke="#b8584a" strokeWidth="2" strokeDasharray="3 4" />
    <g stroke="#6c6c6c" strokeDasharray="2 3">
      <path d="M27 4v20M95 4v20M163 4v20M221 4v20M200 4v20M206 4v20M257 4v20M263 4v20M280 4v20" />
    </g>
  </svg>
);

const Disc = ({ children }) => (
  <svg width="30" height="30" viewBox="0 0 30 30">
    <circle cx="15" cy="15" r="15" fill="#5a5a5a" />
    {children}
  </svg>
);

/* One bar at 95 BPM in 4/4 lasts 240 / 95 seconds; the first bar is bar 1. */
const barAt = (sec) => 1 + (sec * 95) / 240;
const TIMES = each(50, 231, 5).map(([s]) => s);

export default function App() {
  return (
    <>
      <GlobalStyle />
      <Page>
        <ControlBar />
        <Body>
          <LeftRail>
            <IconButton aria-label="Show browser">
              <Disc><path d="M7 8h16l-8 15z" fill="#858585" /></Disc>
            </IconButton>
            <IconButton aria-label="Groove pool">
              <Disc>
                <path d="M6 12c4-5 7-3 9-1s5 3 9-1M6 19c4-5 7-3 9-1s5 3 9-1" fill="none" stroke="#858585" strokeWidth="2" />
              </Disc>
            </IconButton>
          </LeftRail>
          <Panel>
            <Overview />
            <RulerRow>
              <Scale>
                {each(17, 94, 4).map(([b]) => (
                  <React.Fragment key={b}>
                    <Tick $top={33} $h={9} style={{ left: pct(b) }} />
                    {b < 93 && <Tick $top={40} $h={3} style={{ left: pct(b + 2) }} />}
                    {b < 93 && <ScaleText $top={25} $pad={8} style={{ left: pct(b) }}>{b}</ScaleText>}
                  </React.Fragment>
                ))}
              </Scale>
            </RulerRow>
            <LoopRow>
              <LoopLane>
                <LoopBrace>
                  <svg width="14" viewBox="0 0 14 14"><path d="M0 0l13 7L0 14" fill="none" stroke="#2a2a32" strokeWidth="1.500" /></svg>
                  <svg width="14" viewBox="0 0 14 14"><path d="M14 0L1 7l13 7" fill="none" stroke="#2a2a32" strokeWidth="1.500" /></svg>
                </LoopBrace>
              </LoopLane>
            </LoopRow>
            <MainRow>
              <TrackLanes />
              <TrackHeaders />
            </MainRow>
            <TimeRow>
              <Scale>
                {TIMES.filter((s) => barAt(s) < START + SPAN).map((s) => (
                  <React.Fragment key={s}>
                    <Tick $top={2} $w={s >= 60 && s % 30 === 0 ? 1 : 2} $h={s >= 60 && s % 30 === 0 ? 11 : 3} style={{ left: pct(barAt(s)) }} />
                    {s >= 60 && s % 30 === 0 && (
                      <ScaleText $top={5} $pad={5} style={{ left: pct(barAt(s)) }}>
                        {`${Math.floor(s / 60)}:${String(s % 60).padStart(2, "0")}`}
                      </ScaleText>
                    )}
                  </React.Fragment>
                ))}
                <Marker $top={1} viewBox="0 0 7 7" style={{ left: 0 }}><path d="M7 0v7H0z" fill={C.cyan} /></Marker>
                <Marker $top={1} viewBox="0 0 7 7" style={{ left: "calc(100% + 8px)" }}><path d="M0 0v7h7z" fill={C.cyan} /></Marker>
              </Scale>
            </TimeRow>
          </Panel>
          <SideColumn />
        </Body>
        <Footer>
          <FooterIcon>
            <IconButton aria-label="Show help"><Disc><path d="M8 7l16 8-16 8z" fill="#858585" /></Disc></IconButton>
          </FooterIcon>
          <InfoBox $gap={4} />
          <InfoBox $gap={12} />
          <DeviceBox>
            45 Strings Fill Serum
            <DeviceThumbs />
          </DeviceBox>
          <FooterIcon>
            <IconButton aria-label="Show device view"><Disc><path d="M22 7L6 15l16 8z" fill="#858585" /></Disc></IconButton>
          </FooterIcon>
        </Footer>
      </Page>
    </>
  );
}
